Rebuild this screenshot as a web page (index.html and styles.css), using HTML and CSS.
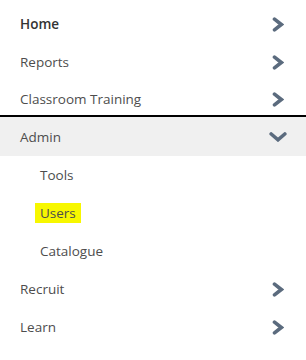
FILE: index.html
```html
<!DOCTYPE html>
<html lang="en">
<head>
    <meta charset="UTF-8">
    <meta name="viewport" content="width=device-width, initial-scale=1.0">
    <title>Menu</title>
    <link rel="stylesheet" href="styles.css">
</head>
<body>
    <ul class="menu">
        <li class="menu-item home">
            <span class="label">Home</span>
            <svg class="chevron" viewBox="0 0 12 15"><polyline points="2.5,2.2 9.3,7.5 2.5,12.8"/></svg>
        </li>
        <li class="menu-item">
            <span class="label">Reports</span>
            <svg class="chevron" viewBox="0 0 12 15"><polyline points="2.5,2.2 9.3,7.5 2.5,12.8"/></svg>
        </li>
        <li class="menu-item last-before-open">
            <span class="label">Classroom Training</span>
            <svg class="chevron" viewBox="0 0 12 15"><polyline points="2.5,2.2 9.3,7.5 2.5,12.8"/></svg>
        </li>
        <li class="menu-item open">
            <span class="label">Admin</span>
            <svg class="chevron down" viewBox="0 0 18 10"><polyline points="2.2,2 9,7.8 15.8,2"/></svg>
        </li>
        <li class="sub-item"><span class="label">Tools</span></li>
        <li class="sub-item"><span class="label marked">Users</span></li>
        <li class="sub-item"><span class="label">Catalogue</span></li>
        <li class="menu-item">
            <span class="label">Recruit</span>
            <svg class="chevron" viewBox="0 0 12 15"><polyline points="2.5,2.2 9.3,7.5 2.5,12.8"/></svg>
        </li>
        <li class="menu-item">
            <span class="label">Learn</span>
            <svg class="chevron" viewBox="0 0 12 15"><polyline points="2.5,2.2 9.3,7.5 2.5,12.8"/></svg>
        </li>
    </ul>
</body>
</html>
```

FILE: styles.css
```css
body {
    margin: 0;
    background-color: #fff;
    font-family: "Open Sans", "Liberation Sans", sans-serif;
    font-size: 13.5px;
    color: #4d4d4d;
}
.menu {
    list-style: none;
    margin: 0;
    padding: 5px 0 0 0;
}
.menu-item, .sub-item {
    display: flex;
    align-items: center;
    justify-content: space-between;
    height: 38px;
    padding: 0 18px 0 20px;
    box-sizing: border-box;
}
.sub-item {
    padding-left: 40px;
}
.home .label {
    font-weight: 600;
    color: #333;
}
.last-before-open {
    height: 32px;
    padding-top: 2px;
    border-bottom: 2px solid #000;
    box-sizing: content-box;
}
.open {
    background-color: #f0f0f0;
    height: 39px;
}
.marked {
    background-color: #f7f700;
    margin-left: -5px;
    padding: 1px 5px 0 5px;
    line-height: 19px;
}
.chevron {
    width: 12px;
    height: 15px;
    margin-right: 4px;
}
.chevron polyline {
    fill: none;
    stroke: #5b6b7e;
    stroke-width: 3.6;
    stroke-linecap: round;
    stroke-linejoin: miter;
}
.chevron.down {
    width: 18px;
    height: 10px;
    margin-right: 1px;
}
```
